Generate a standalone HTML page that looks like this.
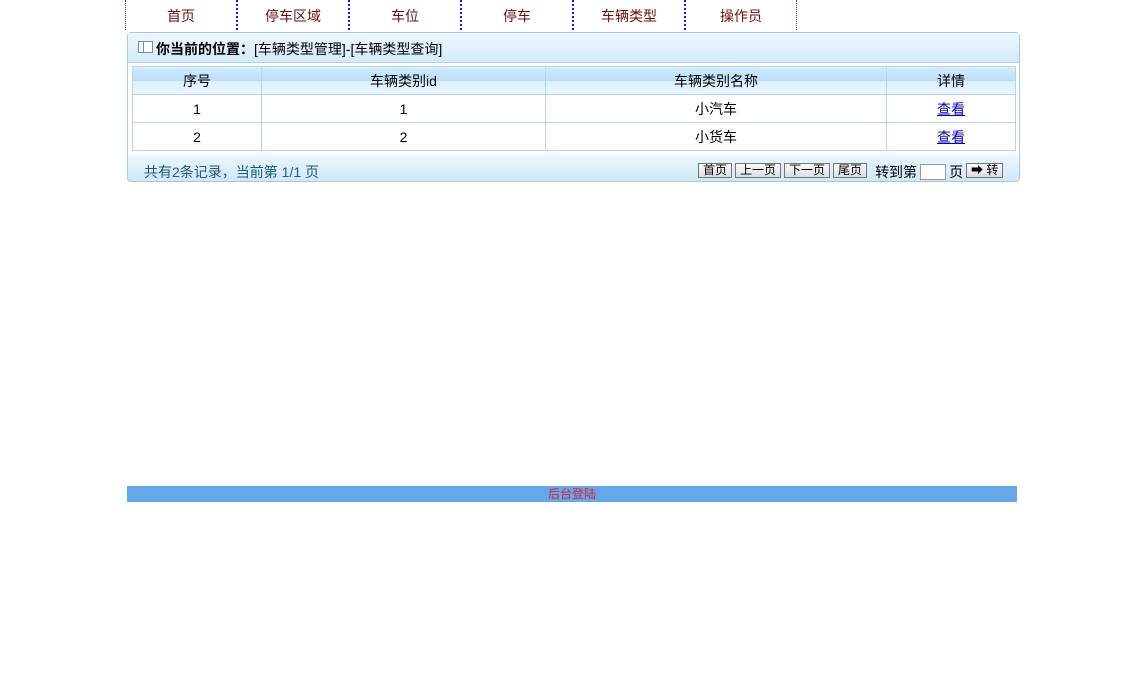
<!DOCTYPE html>
<html><head><meta charset="utf-8"><style>
body{margin:0;background:#fff;font-family:"Liberation Sans","Noto Sans CJK SC",sans-serif;font-size:14px;width:1143px;height:699px;position:relative;overflow:hidden}
.nav{position:absolute;left:125px;top:0;height:30px;display:flex}
.nav div{width:110px;height:30px;line-height:32px;text-align:center;color:#6b0d0d;border-right:2px dotted #1a1acc}
.nav div:first-child{border-left:1px dotted #6a2a9a;width:110px}
.nav div:last-child{border-right:1px dotted #6a2a9a}
.panel{position:absolute;left:127px;top:32px;width:891px;height:148px;border:1px solid #a8c8e0;border-radius:4px;background:linear-gradient(#fff 0,#fff 118px,#e8f4fc 125px,#cfe8f8 148px)}
.hd{height:29px;background:linear-gradient(#eef7fd,#d2eafa);border-bottom:1px solid #b5d3ea;line-height:32px;padding-left:28px;color:#000;position:relative}
.hd i{position:absolute;left:10px;top:8px;width:13px;height:10px;border:1px solid #6a8fb0;background:linear-gradient(90deg,#fff 4px,#6a8fb0 4px,#6a8fb0 5px,#fff 5px)}
table{position:absolute;left:4px;top:33px;width:884px;border-collapse:collapse}
td,th{border:1px solid #b5d3ea;text-align:center;height:25px;line-height:25px;font-weight:normal;padding:2px 0 0}
th{background:linear-gradient(#d2eafa 0,#b8def6 50%,#dcf0fc 51%,#eaf6fd)}
td a{color:#0000cc;text-decoration:underline}
.ft{position:absolute;left:16px;top:129px;color:#1d5a7a}
.pg{position:absolute;left:570px;top:126px;display:flex;align-items:center;gap:3px;font-size:12px}
.b{border:1px solid #777;background:linear-gradient(#fafafa,#ddd);padding:0 4px;height:13px;line-height:13px;font-size:12px}
.in{width:24px;height:14px;border:1px solid #999;background:#fff;margin-top:3px}
.bot{position:absolute;left:127px;top:486px;width:890px;height:16px;background:#62a8ea;color:#e0203a;text-align:center;font-size:12px;line-height:17px}
</style></head><body>
<div class="nav"><div>首页</div><div>停车区域</div><div>车位</div><div>停车</div><div>车辆类型</div><div>操作员</div></div>
<div class="panel">
<div class="hd"><i></i><b>你当前的位置：</b>[车辆类型管理]-[车辆类型查询]</div>
<table>
<tr><th style="width:128px">序号</th><th style="width:283px">车辆类别id</th><th style="width:340px">车辆类别名称</th><th>详情</th></tr>
<tr><td>1</td><td>1</td><td>小汽车</td><td><a>查看</a></td></tr>
<tr><td>2</td><td>2</td><td>小货车</td><td><a>查看</a></td></tr>
</table>
<div class="ft">共有2条记录，当前第 1/1 页</div>
<div class="pg"><span class="b">首页</span><span class="b">上一页</span><span class="b">下一页</span><span class="b">尾页</span><span style="font-size:14px;margin-left:5px;margin-top:3px">转到第</span><span class="in"></span><span style="font-size:14px;margin-top:3px">页</span><span class="b">➡ 转</span></div>
</div>
<div class="bot">后台登陆</div>
</body></html>
